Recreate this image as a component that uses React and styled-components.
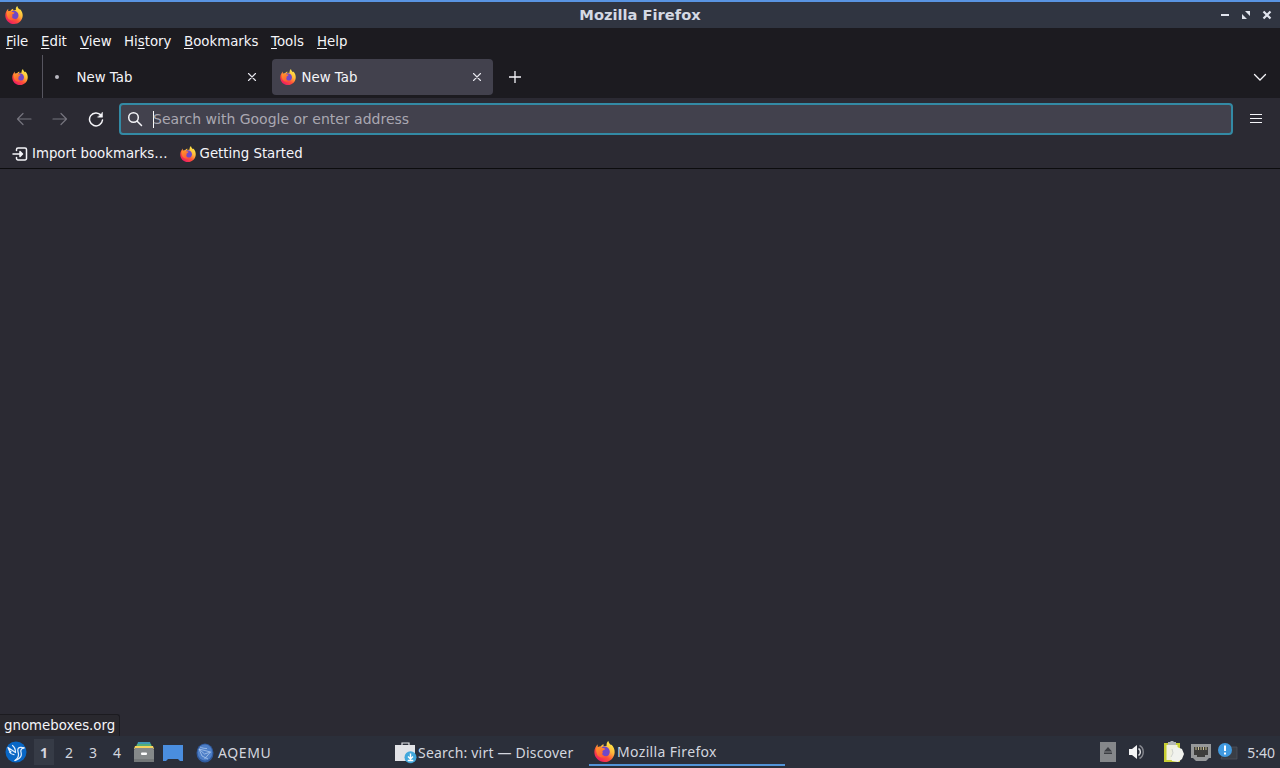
import React, { useId } from "react";
import styled, { createGlobalStyle } from "styled-components";

const GlobalStyle = createGlobalStyle`
  body {
    margin: 0;
    background: #2b2a33;
    overflow: hidden;
  }
  * {
    box-sizing: border-box;
  }
  svg {
    display: block;
    flex: none;
  }
`;

const Desktop = styled.div`
  width: 1280px;
  height: 768px;
  display: flex;
  flex-direction: column;
  font-family: "DejaVu Sans", sans-serif;
  font-size: 13.33px;
  color: #f5f5f9;
  white-space: nowrap;
`;

const TitleBar = styled.header`
  height: 28px;
  flex: none;
  display: grid;
  grid-template-columns: 90px 1fr 90px;
  align-items: center;
  border-top: 2px solid #5994e2;
  background: #303541;
  padding: 0 8px 0 5px;
`;

const WindowTitle = styled.div`
  text-align: center;
  font-size: 14.67px;
  font-weight: bold;
  line-height: 26px;
  color: #d5d9e4;
  padding-left: 3px;
`;

const WindowButtons = styled.div`
  display: flex;
  justify-content: flex-end;
  gap: 11px;
`;

const MenuBar = styled.nav`
  height: 27px;
  flex: none;
  display: flex;
  gap: 13px;
  padding-left: 6px;
  line-height: 28px;
  background: #1c1b20;
`;

const MenuItem = styled.span`
  width: ${(props) => props.$width}px;

  u {
    text-decoration-thickness: 1px;
    text-underline-offset: 2px;
  }
`;

const TabStrip = styled.div`
  height: 43px;
  flex: none;
  display: flex;
  align-items: center;
  background: #1c1b20;
`;

const PinnedTab = styled.div`
  width: 43px;
  height: 43px;
  display: flex;
  align-items: center;
  padding-left: 12px;
  border-right: 1px solid #56555f;
`;

const Tab = styled.div`
  width: ${(props) => (props.$active ? 221 : 229)}px;
  height: 36px;
  display: flex;
  align-items: center;
  padding: 0 ${(props) => (props.$active ? 11 : 15)}px 0 ${(props) => (props.$active ? 8 : 12)}px;
  border-radius: 4px;
  background: ${(props) => (props.$active ? "#42414d" : "transparent")};
`;

const TabLabel = styled.span`
  flex: 1;
  padding-top: 2px;
  padding-left: ${(props) => props.$gap}px;
`;

const Throbber = styled.span`
  width: 4px;
  height: 4px;
  border-radius: 50%;
  background: #b9b8c0;
`;

const NewTabButton = styled.div`
  flex: 1;
  padding: 1px 0 0 16px;
`;

const AllTabs = styled.div`
  padding-right: 13px;
`;

const NavBar = styled.div`
  height: 42px;
  flex: none;
  display: flex;
  align-items: center;
  padding: 0 17px 0 16px;
  background: #2b2a33;
`;

const NavButtons = styled.div`
  width: 103px;
  display: flex;
  gap: 20px;
`;

const UrlBar = styled.div`
  width: 1114px;
  height: 32px;
  display: flex;
  align-items: center;
  padding-left: 6px;
  border: 2px solid #338aa5;
  border-radius: 4px;
  background: #42414d;
`;

const Caret = styled.span`
  width: 1px;
  height: 17px;
  margin-left: 10px;
  background: #fbfbfe;
`;

const Placeholder = styled.span`
  font-size: 14px;
  color: #aaa8b2;
  margin-left: -1px;
`;

const MenuButton = styled.div`
  margin-left: 16px;
`;

const BookmarksBar = styled.div`
  height: 29px;
  flex: none;
  display: flex;
  align-items: center;
  gap: 12px;
  padding: 0 0 1px 12px;
  border-bottom: 1px solid #0c0c0e;
  background: #2b2a33;
`;

const Bookmark = styled.div`
  display: flex;
  align-items: center;
  gap: 4px;
`;

const Page = styled.main`
  flex: 1;
  display: flex;
  align-items: flex-end;
  background: #2b2a33;
`;

const StatusPanel = styled.div`
  width: 120px;
  height: 22px;
  padding-left: 4px;
  line-height: 21px;
  border: solid #1c1b20;
  border-width: 1px 1px 0 0;
  border-radius: 0 3px 0 0;
  background: #29282e;
`;

const Taskbar = styled.footer`
  height: 32px;
  flex: none;
  display: flex;
  align-items: center;
  background: #2b2f3a;
  color: #d3d6df;
  font-family: "Noto Sans", sans-serif;
  font-size: 14px;
`;

const StartButton = styled.div`
  width: 34px;
  padding-left: 5px;
`;

const Workspace = styled.div`
  width: ${(props) => (props.$current ? 20 : 24)}px;
  height: 26px;
  line-height: 27px;
  text-align: center;
  margin-right: ${(props) => (props.$current ? 3 : 0)}px;
  font-weight: ${(props) => (props.$current ? "bold" : "normal")};
  background: ${(props) => (props.$current ? "#363b46" : "transparent")};
`;

const QuickLaunch = styled.div`
  width: 63px;
  display: flex;
  align-items: flex-end;
  gap: 9px;
  padding-left: 5px;
`;

const Task = styled.div`
  width: ${(props) => props.$width}px;
  height: ${(props) => (props.$active ? 28 : 32)}px;
  display: flex;
  align-items: center;
  gap: ${(props) => props.$gap}px;
  padding-left: ${(props) => (props.$active ? 5 : 4)}px;
  padding-top: ${(props) => (props.$active ? 0 : 1)}px;
  letter-spacing: ${(props) => props.$tracking || 0}px;
  border-bottom: ${(props) => (props.$active ? "2px solid #5294d8" : "none")};
`;

const Tray = styled.div`
  flex: 1;
  display: flex;
  align-items: center;
  justify-content: flex-end;
  padding-right: 5px;
`;

const TrayItem = styled.div`
  margin-right: ${(props) => props.$gap}px;
`;

const FirefoxIcon = ({ size = 16 }) => {
    const id = useId();
    return (
        <svg width={size} height={size} viewBox="0 0 24 24">
            <defs>
                <linearGradient id={id + "body"} x1="0.85" y1="0.05" x2="0.25" y2="0.95">
                    <stop offset="0" stopColor="#fff04a" />
                    <stop offset="0.38" stopColor="#ffb83a" />
                    <stop offset="0.68" stopColor="#ff5137" />
                    <stop offset="1" stopColor="#ec1d63" />
                </linearGradient>
                <linearGradient id={id + "head"} x1="0" y1="0" x2="0.7" y2="1">
                    <stop offset="0" stopColor="#ff9a2a" />
                    <stop offset="1" stopColor="#ff5236" />
                </linearGradient>
            </defs>
            <path
                fill={`url(#${id}body)`}
                d="M4.5 3.6C4 5 4.1 6 4.5 7.1c.8-.5 2-.8 3-.7C8.3 5 9.5 4 11 3.6c-.3 1-.2 1.8.3 2.500l3.200-.7C14.100 3.200 14.800 1.100 16.500 0c.2 2 1.400 3.200 3 4.700.2-.1.3-.4.3-.8 2.700 2.600 4 5.700 3.800 9.100C23.200 19.300 18.100 24 12 24 5.500 24 .4 19 .4 12.600c0-3.600 1.600-6.800 4.100-9z"
            />
            <path fill="#7048c8" d="M9 7c4-1.800 8.700.8 9 5 .2 3.600-2.500 6.100-5.800 6-3-.1-5.200-2.500-5.100-5.400 0-2.200.5-4.200 1.900-5.600z" />
            <path
                fill={`url(#${id}head)`}
                d="M2.500 8.700C4.500 6.300 7.400 6 9.700 8c1.200.1 2.500.3 3 .9-.2 1.200-1.800 1.500-2.700 2.200-.6.800-.4 1.600.2 2.200-1 .6-1 1.700-.1 2.700 1.500 1.500 3.700 1.700 5.800.9-2 2.700-9.300 3.100-12-.7C3 14 2.100 11.400 2.500 8.700z"
            />
        </svg>
    );
};

const Line = ({ size = 16, color = "#f5f5f9", width = 1.3, children }) => (
    <svg
        width={size}
        height={size}
        viewBox="0 0 16 16"
        fill="none"
        stroke={color}
        strokeWidth={width}
        strokeLinecap="round"
        strokeLinejoin="round"
    >
        {children}
    </svg>
);

const CloseIcon = () => (
    <svg width="10" height="10" viewBox="0 0 10 10" stroke="#e8e8ef" strokeWidth="1.1" strokeLinecap="round">
        <path d="M1.5 1.500l7 7M8.500 1.500l-7 7" />
    </svg>
);

const LubuntuIcon = () => (
    <svg width="22" height="22" viewBox="0 0 22 22">
        <circle cx="11" cy="11" r="10.500" fill="#0967c5" />
        <g fill="none" stroke="#e6f0fc" strokeWidth="1.200" strokeLinecap="round" strokeLinejoin="round">
            <path d="M10.500 11.500L3 6.500c.5 2 1.500 3.500 3 4.300L4.500 11c1 1.700 2.500 2.600 4.500 2.700" />
            <path d="M10.500 11.500C10.500 8.500 9.500 6 7.500 4.500" />
            <path d="M19 6.800l-3-.5c-2-.2-3.300 1-3.200 3 0 1.500.7 2.500.7 4.200 0 2.500-1.300 4.500-3.500 6" />
            <path d="M19 6.800c-2 .3-3 1.200-3.200 3 0 1.700.9 2.800.4 4.700-.5 2-3 3.800-6.200 5" />
        </g>
    </svg>
);

const FilesIcon = () => (
    <svg width="20" height="20" viewBox="0 0 20 20">
        <path d="M4 0h12l1 3H3z" fill="#3f99b5" />
        <path d="M3 2h14l1 3H2z" fill="#55af78" />
        <path d="M1 4h18l1 3H0z" fill="#f5d45d" />
        <path d="M1 6h18l1 2v12H0V8z" fill="#85898a" />
        <path d="M0 17h20v3H0z" fill="#747879" />
        <rect x="7" y="10.500" width="6" height="2.500" rx="1" fill="#fff" />
    </svg>
);

const DesktopIcon = () => (
    <svg width="20" height="17" viewBox="0 0 20 17">
        <path d="M0 0h20v16h-3l-2-2H5l-2 2H0z" fill="#4a8edf" />
    </svg>
);

const AqemuIcon = () => (
    <svg width="18" height="20" viewBox="0 0 18 20">
        <ellipse cx="9" cy="10" rx="8.500" ry="9.500" fill="#305b9f" />
        <ellipse cx="9" cy="9.500" rx="7.300" ry="8" fill="#4e7fc7" />
        <path d="M4 4c2 1 4 1.500 7 1.500M3 6l3 7 6 3M3 6l11.500 3-6 7M3 6l5.500 5 6-2" fill="none" stroke="#a9c6ee" strokeWidth=".8" />
    </svg>
);

const DiscoverIcon = () => (
    <svg width="22" height="22" viewBox="0 0 22 22">
        <path d="M7 4V1h7v3" fill="none" stroke="#e4e5e9" strokeWidth="1.200" />
        <path d="M0 3h20v16H0z" fill="#e2e3e7" />
        <circle cx="15.500" cy="15.300" r="6" fill="#40a7dc" />
        <path d="M15.500 11.500v5M13 14.500l2.500 2.500 2.500-2.500M12.700 18.500h5.600" fill="none" stroke="#fff" strokeWidth="1.400" />
    </svg>
);

const EjectIcon = () => (
    <svg width="16" height="20" viewBox="0 0 16 20">
        <path d="M0 0h16v20H0z" fill="#85878a" />
        <path d="M4 9.500L8 5l4 4.500zM4 10.500h8V12H4z" fill="#3c3e43" />
    </svg>
);

const VolumeIcon = () => (
    <svg width="17" height="16" viewBox="0 0 17 16">
        <path d="M1 5h3l5-4v14l-5-4H1z" fill="#f5f5f6" />
        <path d="M10.500 4.500c2.500 1.500 2.500 5.500 0 7" fill="none" stroke="#dcdde0" strokeWidth="1.500" />
        <path d="M11.500 1.500c5 2.500 5 10.500 0 13" fill="none" stroke="#85878e" strokeWidth="1.400" />
    </svg>
);

const ClipboardIcon = () => (
    <svg width="20" height="22" viewBox="0 0 20 22">
        <path d="M0 2h16v19H0z" fill="#c7ce32" />
        <path d="M2.500 4h11v15h-11z" fill="#f0f0df" />
        <path d="M4 1h2l1-1h2l1 1h2v3H4z" fill="#b4b7b7" />
        <path d="M9 8l4-2 5 2 2 5-2 5-4 3-6-1-1-4z" fill="#f1f2ee" />
        <path d="M8 8l1 4-2 4" fill="none" stroke="#c7cac4" strokeWidth=".8" />
    </svg>
);

const NetworkIcon = () => (
    <svg width="20" height="18" viewBox="0 0 20 18">
        <path d="M0 1h20v14h-2l-3 3H5l-3-3H0z" fill="#96989a" />
        <path d="M3 4h14v8h-3v2H6v-2H3z" fill="#3d3d3c" />
        <path d="M5 4v3M7.500 4v3M10 4v3M12.500 4v3M15 4v3" stroke="#c7bd91" />
    </svg>
);

const UpdateIcon = () => (
    <svg width="20" height="18" viewBox="0 0 20 18">
        <path d="M7 4h12v12H3z" fill="#3a3e46" stroke="#51555e" strokeWidth=".7" />
        <circle cx="7" cy="7" r="7" fill="#4099df" />
        <path d="M7 2.500v5.500M7 9.500v2" stroke="#fff" strokeWidth="2" />
    </svg>
);

const App = () => {
    return (
        <Desktop>
            <GlobalStyle />
            <TitleBar>
                <FirefoxIcon size={18} />
                <WindowTitle>Mozilla Firefox</WindowTitle>
                <WindowButtons>
                    <svg width="10" height="10" viewBox="0 0 10 10"><path d="M1 5h8" stroke="#e0e4ed" strokeWidth="2" /></svg>
                    <svg width="10" height="10" viewBox="0 0 10 10"><path d="M4 1h5v5zM1 4v5h5z" fill="#e0e4ed" /></svg>
                    <svg width="10" height="10" viewBox="0 0 10 10"><path d="M1.500 1.500l7 7m0-7l-7 7" stroke="#e0e4ed" strokeWidth="2.200" /></svg>
                </WindowButtons>
            </TitleBar>
            <MenuBar>
                <MenuItem $width={22}><u>F</u>ile</MenuItem>
                <MenuItem $width={26}><u>E</u>dit</MenuItem>
                <MenuItem $width={31}><u>V</u>iew</MenuItem>
                <MenuItem $width={47}>Hi<u>s</u>tory</MenuItem>
                <MenuItem $width={74}><u>B</u>ookmarks</MenuItem>
                <MenuItem $width={33}><u>T</u>ools</MenuItem>
                <MenuItem $width={31}><u>H</u>elp</MenuItem>
            </MenuBar>
            <TabStrip>
                <PinnedTab><FirefoxIcon /></PinnedTab>
                <Tab>
                    <Throbber />
                    <TabLabel $gap={17.5}>New Tab</TabLabel>
                    <CloseIcon />
                </Tab>
                <Tab $active>
                    <FirefoxIcon />
                    <TabLabel $gap={5.5}>New Tab</TabLabel>
                    <CloseIcon />
                </Tab>
                <NewTabButton>
                    <svg width="12" height="12" viewBox="0 0 12 12" stroke="#f5f5f9" strokeWidth="1.300"><path d="M0 6h12M6 0v12" /></svg>
                </NewTabButton>
                <AllTabs>
                    <svg width="14" height="14" viewBox="0 0 14 14" fill="none" stroke="#f5f5f9" strokeWidth="1.300" strokeLinecap="round"><path d="M1.500 4.500L7 10l5.500-5.500" /></svg>
                </AllTabs>
            </TabStrip>
            <NavBar>
                <NavButtons>
                    <Line color="#75747e" width={1.2}><path d="M15 8H1.500M7 2.500L1.500 8 7 13.500" /></Line>
                    <Line color="#75747e" width={1.2}><path d="M1 8h13.500M9 2.500L14.500 8 9 13.500" /></Line>
                    <Line width={1.5}>
                        <path d="M13 4.200A6.500 6.500 0 1 0 14.500 9" />
                        <path d="M14.500 1.500v4.700H9.800z" fill="#f5f5f9" strokeWidth=".5" />
                    </Line>
                </NavButtons>
                <UrlBar>
                    <Line width={1.5}><circle cx="6.500" cy="6.500" r="4.800" /><path d="M10.200 10.200l4.300 4.300" /></Line>
                    <Caret />
                    <Placeholder>Search with Google or enter address</Placeholder>
                </UrlBar>
                <MenuButton>
                    <svg width="14" height="12" viewBox="0 0 14 12" stroke="#f5f5f9" strokeWidth="1.200"><path d="M1 1.500h12M1 5.500h12M1 9.500h12" /></svg>
                </MenuButton>
            </NavBar>
            <BookmarksBar>
                <Bookmark>
                    <Line width={1.5}><path d="M4.500 4.500V3.500a1.500 1.500 0 0 1 1.500-1.500h7A1.500 1.500 0 0 1 14.500 3.500v9A1.500 1.500 0 0 1 13 14H6a1.500 1.500 0 0 1-1.500-1.500v-1M1 8h8.500M8 5.500L10.500 8 8 10.500z" /></Line>
                    Import bookmarks…
                </Bookmark>
                <Bookmark>
                    <FirefoxIcon />
                    Getting Started
                </Bookmark>
            </BookmarksBar>
            <Page>
                <StatusPanel>gnomeboxes.org</StatusPanel>
            </Page>
            <Taskbar>
                <StartButton><LubuntuIcon /></StartButton>
                <Workspace $current>1</Workspace>
                <Workspace>2</Workspace>
                <Workspace>3</Workspace>
                <Workspace>4</Workspace>
                <QuickLaunch><FilesIcon /><DesktopIcon /></QuickLaunch>
                <Task $width={199} $gap={4} $tracking={0.6}><AqemuIcon />AQEMU</Task>
                <Task $width={198} $gap={1} $tracking={0.2}><DiscoverIcon />Search: virt — Discover</Task>
                <Task $width={196} $gap={2} $tracking={0.35} $active><FirefoxIcon size={21} />Mozilla Firefox</Task>
                <Tray>
                    <TrayItem $gap={12}><EjectIcon /></TrayItem>
                    <TrayItem $gap={19}><VolumeIcon /></TrayItem>
                    <TrayItem $gap={7}><ClipboardIcon /></TrayItem>
                    <TrayItem $gap={7}><NetworkIcon /></TrayItem>
                    <TrayItem $gap={9}><UpdateIcon /></TrayItem>
                    5:40
                </Tray>
            </Taskbar>
        </Desktop>
    );
};

export default App;
